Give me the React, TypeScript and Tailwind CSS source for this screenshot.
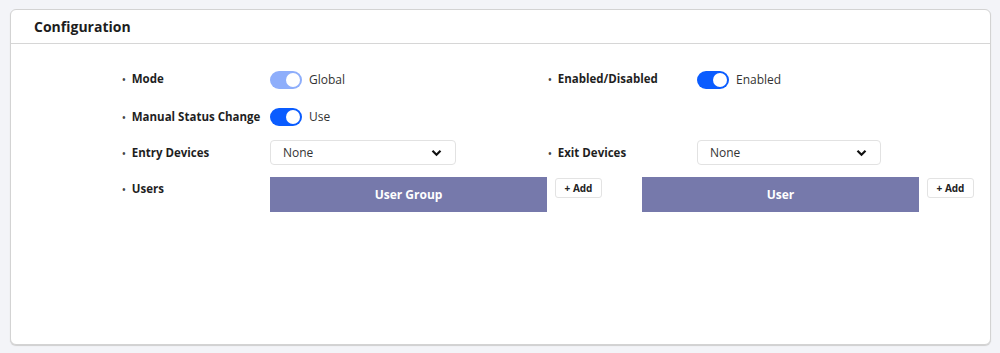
import React from "react";

const font = { fontFamily: '"Open Sans", "Noto Sans", sans-serif' };

const Label = ({ text, width }: { text: string; width: string }) => (
  <div className={`flex items-center gap-[6px] text-[11.5px] font-bold text-[#1f1f1f] leading-5 ${width}`}>
    <span className="text-[10px] font-semibold text-[#444]">•</span>
    <span>{text}</span>
  </div>
);

const Toggle = ({ light, text }: { light?: boolean; text: string }) => (
  <div className="flex items-center gap-[7px]">
    <div
      className={`flex h-[18px] w-[32px] items-center justify-end rounded-full pr-[2px] ${
        light ? "bg-[#8eaefb]" : "bg-[#0a5cff]"
      }`}
    >
      <div className="h-[14px] w-[14px] rounded-full bg-white" />
    </div>
    <span className="text-[12px] text-[#333]">{text}</span>
  </div>
);

const Select = ({ width }: { width: string }) => (
  <div
    className={`flex h-[25px] items-center justify-between rounded-[4px] border border-[#e2e2e2] bg-white pl-3 pr-[13px] ${width}`}
  >
    <span className="text-[12px] text-[#333]">None</span>
    <svg width="11" height="8" viewBox="0 0 11 8">
      <path d="M1.5 1.8 L5.5 5.8 L9.5 1.8" fill="none" stroke="#111" strokeWidth="2.2" />
    </svg>
  </div>
);

const AddButton = () => (
  <div className="mt-[1px] flex h-[20px] w-[47px] items-center justify-center rounded-[3px] border border-[#e3e3e3] bg-white text-[10px] font-bold text-[#222]">
    + Add
  </div>
);

const Picker = ({ text }: { text: string }) => (
  <div className="flex h-[35px] w-[277px] items-center justify-center bg-[#7679ab] text-[12px] font-bold text-white">
    {text}
  </div>
);

export default function App() {
  return (
    <div className="h-[353px] w-[1000px] bg-[#f3f4f8] pl-[10px] pt-[9px]" style={font}>
      <div className="h-[336px] w-[981px] rounded-[6px] border border-[#d3d3d3] bg-white shadow-[0_1px_1px_#cfcfcf]">
        <div className="flex h-[34px] items-center border-b border-[#d6d6d6] pl-[23px] text-[14px] font-bold text-[#1d1d1d]">
          Configuration
        </div>
        <div className="pl-[111px] pt-[25px]">
          <div className="flex h-5 items-center">
            <div className="flex w-[426px] items-center">
              <Label text="Mode" width="w-[148px]" />
              <div className="mt-[2px]">
                <Toggle light text="Global" />
              </div>
            </div>
            <Label text="Enabled/Disabled" width="w-[149px]" />
            <div className="mt-[2px]">
              <Toggle text="Enabled" />
            </div>
          </div>
          <div className="mt-[18px] flex h-5 items-center">
            <Label text="Manual Status Change" width="w-[148px]" />
            <Toggle text="Use" />
          </div>
          <div className="mt-[13px] flex h-[25px] items-center">
            <div className="flex w-[426px] items-center">
              <Label text="Entry Devices" width="w-[148px]" />
              <Select width="w-[186px]" />
            </div>
            <Label text="Exit Devices" width="w-[149px]" />
            <Select width="w-[184px]" />
          </div>
          <div className="mt-[12px] flex items-start">
            <div className="mt-[2px]">
              <Label text="Users" width="w-[148px]" />
            </div>
            <Picker text="User Group" />
            <div className="ml-[8px]">
              <AddButton />
            </div>
            <div className="ml-[40px]">
              <Picker text="User" />
            </div>
            <div className="ml-[8px]">
              <AddButton />
            </div>
          </div>
        </div>
      </div>
    </div>
  );
}
